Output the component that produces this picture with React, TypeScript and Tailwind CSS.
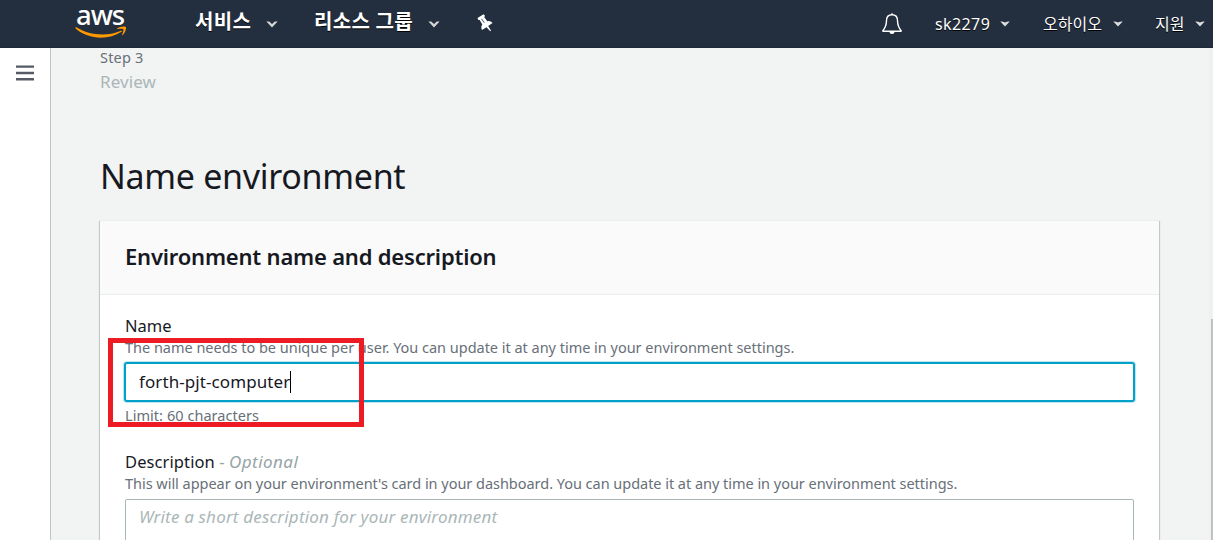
import React from "react";

function Caret({ className = "" }: { className?: string }) {
  return (
    <svg className={className} width="10" height="6" viewBox="0 0 10 6">
      <path d="M0.3 0.5 Q2.5 0 5 1.6 Q7.5 0 9.7 0.5 L5 5.6 Z" fill="#dddddd" />
    </svg>
  );
}

function Chevron({ className = "" }: { className?: string }) {
  return (
    <svg className={className} width="12" height="7" viewBox="0 0 12 7">
      <path d="M0.4 0.6 H3.2 L6 2.9 L8.8 0.6 H11.6 L6 6.4 Z" fill="#d5d5d5" />
    </svg>
  );
}

function Logo() {
  return (
    <div className="relative ml-[75px] h-12 w-[52px] shrink-0">
      <span className="absolute left-[1px] top-0 text-[27.500px] leading-[30px] font-medium tracking-[-1.1px] text-white [text-shadow:none]">aws</span>
      <svg className="absolute left-0 top-[26px]" width="52" height="13" viewBox="0 0 52 13" fill="#ff9900">
        <path d="M0.4 1.6 C0.6 1 1.1 1.1 1.8 1.5 C14 9.300 32 10.700 45.3 4.9 C46.7 4.3 47.6 5 46.5 5.8 C33 14.600 12.500 13.4 0.7 2.500 C0.3 2.1 0.2 1.8 0.400 1.6 Z" />
        <path d="M42.100 2.600 C44 0.400 50.200 -0.100 50.900 1 C51.500 2.200 50.200 7.100 47.900 9 C47.300 9.500 46.900 9.200 47.200 8.500 C48 6.600 48.800 4 48.300 3.300 C47.700 2.500 44.900 2.800 42.700 3.100 C41.900 3.200 41.700 3 42.100 2.600 Z" />
      </svg>
    </div>
  );
}

function Bell() {
  return (
    <svg className="shrink-0" width="20" height="22" viewBox="0 0 20 22" fill="none" stroke="#ffffff" strokeWidth="1.4">
      <path d="M10 1.800 C6.500 1.800 4.600 4.200 4.500 7.500 C4.400 12.500 3.400 14.800 0.900 17.600 C0.700 18 0.900 18.300 1.400 18.300 H18.600 C19.100 18.300 19.300 18 19.100 17.600 C16.600 14.800 15.600 12.500 15.500 7.500 C15.400 4.200 13.500 1.800 10 1.800 Z" />
      <path d="M10 0.300 V2" />
      <path d="M7.400 18.500 H12.600 C12.500 20.200 11.500 21 10 21 C8.500 21 7.500 20.200 7.400 18.500 Z" fill="#ffffff" stroke="none" />
    </svg>
  );
}

function Pin() {
  return (
    <svg width="16" height="18" viewBox="0 0 16 18" fill="#ffffff">
      <path d="M0.500 4 L6.600 0.200 L7.900 1.800 L7.300 3.200 L10.300 7.200 C12.200 6.600 14.300 7.200 15.500 9 L11.200 12 L14 16.600 L13.200 17.200 L9.500 13.200 L5 15.900 C4 14.200 4.100 12 5.300 10.600 L2.700 5.900 L1.300 5.900 Z" />
      <path d="M4.500 4.800 L7.300 8.800" stroke="#232f3e" strokeWidth="0.800" />
    </svg>
  );
}

function Header() {
  return (
    <header className="flex h-12 shrink-0 border-b border-[#1d2838] bg-[#232f3e] text-white [text-shadow:0_1px_0_#000]">
      <Logo />
      <nav className="flex">
        <div className="ml-[68px] flex h-[42px] w-[83px] items-center justify-between">
          <span className="whitespace-nowrap pt-[2px] text-[20px] font-bold tracking-[0.3px]">서비스</span>
          <Chevron className="mt-[7px]" />
        </div>
        <div className="ml-[36px] flex h-[42px] w-[126px] items-center justify-between">
          <span className="whitespace-nowrap pt-[2px] text-[20px] font-bold tracking-[0.3px]">리소스 그룹</span>
          <Chevron className="mt-[7px]" />
        </div>
        <div className="ml-[37px] mt-[14px]">
          <Pin />
        </div>
      </nav>
      <div className="ml-auto flex w-[331px] items-center">
        <Bell />
        <div className="ml-[33px] flex w-[75px] items-center justify-between">
          <span className="text-[16px] tracking-[0.4px]">sk2279</span>
          <Caret />
        </div>
        <div className="ml-[33px] flex w-[80px] items-center justify-between">
          <span className="whitespace-nowrap text-[16px]">오하이오</span>
          <Caret />
        </div>
        <div className="ml-[32px] flex w-[50px] items-center justify-between">
          <span className="whitespace-nowrap text-[16px]">지원</span>
          <Caret />
        </div>
      </div>
    </header>
  );
}

export default function App() {
  return (
    <div className="relative flex h-[540px] w-[1213px] flex-col overflow-hidden bg-[#f2f3f3] font-['Noto_Sans','Noto_Sans_CJK_KR',sans-serif] text-[#16191f]">
      <Header />
      <div className="flex min-h-0 flex-1">
        <aside className="w-[51px] shrink-0 border-r border-[#bfc4c5] bg-white pl-4 pt-[17px]">
          <svg width="18" height="16" viewBox="0 0 18 16" stroke="#545b64" strokeWidth="2.400">
            <path d="M0 1.600 H18 M0 8 H18 M0 14.200 H18" />
          </svg>
        </aside>
        <main className="flex w-[1108px] shrink-0 flex-col pl-[49px]">
          <div className="h-5 text-[14.5px] leading-[18px] tracking-[0.2px] text-[#687078]">Step 3</div>
          <div className="mt-[3px] h-[22px] text-[17px] leading-[22px] tracking-[0.1px] text-[#aab7b8]">Review</div>
          <h1 className="mt-[59px] h-[46px] whitespace-nowrap text-[34px] leading-[48px] tracking-[-0.300px]">Name environment</h1>
          <section className="mt-[22px] min-h-0 flex-1 border-t border-[#eaeded] bg-white shadow-[0_1px_1px_0_rgba(0,28,36,0.3),1px_1px_1px_0_rgba(0,28,36,0.15),-1px_1px_1px_0_rgba(0,28,36,0.15)]">
            <div className="flex h-[74px] items-center border-b border-[#eaeded] bg-[#fafafa] pb-[3px] pl-[25px]">
              <h2 className="whitespace-nowrap text-[22px] font-semibold tracking-[-0.2px]">Environment name and description</h2>
            </div>
            <div className="flex flex-col px-[25px] pt-5">
              <label className="h-[22px] text-[16.5px] leading-[22px]">Name</label>
              <p className="h-[22px] whitespace-nowrap text-[14.5px] leading-[20px] tracking-[-0.02px] text-[#687078]">The name needs to be unique per user. You can update it at any time in your environment settings.</p>
              <div className="-ml-px mt-[3px] flex h-10 w-[1011px] items-center rounded-[3px] border-2 border-[#00a1c9] pl-[13px] shadow-[0_0_0_1px_#bfe5f1]">
                <span className="text-[17px] tracking-[0.09px]">forth-pjt-computer</span>
                <span className="h-[22px] w-px bg-black" />
              </div>
              <p className="mt-[3px] h-[22px] text-[14.5px] leading-[20px] tracking-[0.05px] text-[#687078]">Limit: 60 characters</p>
              <label className="mt-6 h-[22px] whitespace-nowrap text-[16.5px] leading-[22px] tracking-[0.1px]">
                Description <span className="text-[#95a5a6]">- <i className="text-[17px] tracking-[0.45px]">Optional</i></span>
              </label>
              <p className="h-[22px] whitespace-nowrap text-[14.5px] leading-[20px] tracking-[-0.03px] text-[#687078]">This will appear on your environment's card in your dashboard. You can update it at any time in your environment settings.</p>
              <div className="mt-1 h-[60px] w-[1009px] shrink-0 rounded-[2px] border border-[#aab7b8] pl-[13px] pt-[6px] text-[17px] italic leading-[22px] tracking-[0.18px] text-[#aab7b8]">
                <span>Write a short description for your environment</span>
              </div>
            </div>
          </section>
        </main>
        <div className="ml-auto w-1 bg-[#f0f0f0] pl-[2px] pt-[271px]">
          <div className="h-full bg-[#c1c1c1]" />
        </div>
      </div>
      <div className="absolute left-[108px] top-[338px] h-[89px] w-[256px] border-[5px] border-[#ed1c24]" />
    </div>
  );
}
